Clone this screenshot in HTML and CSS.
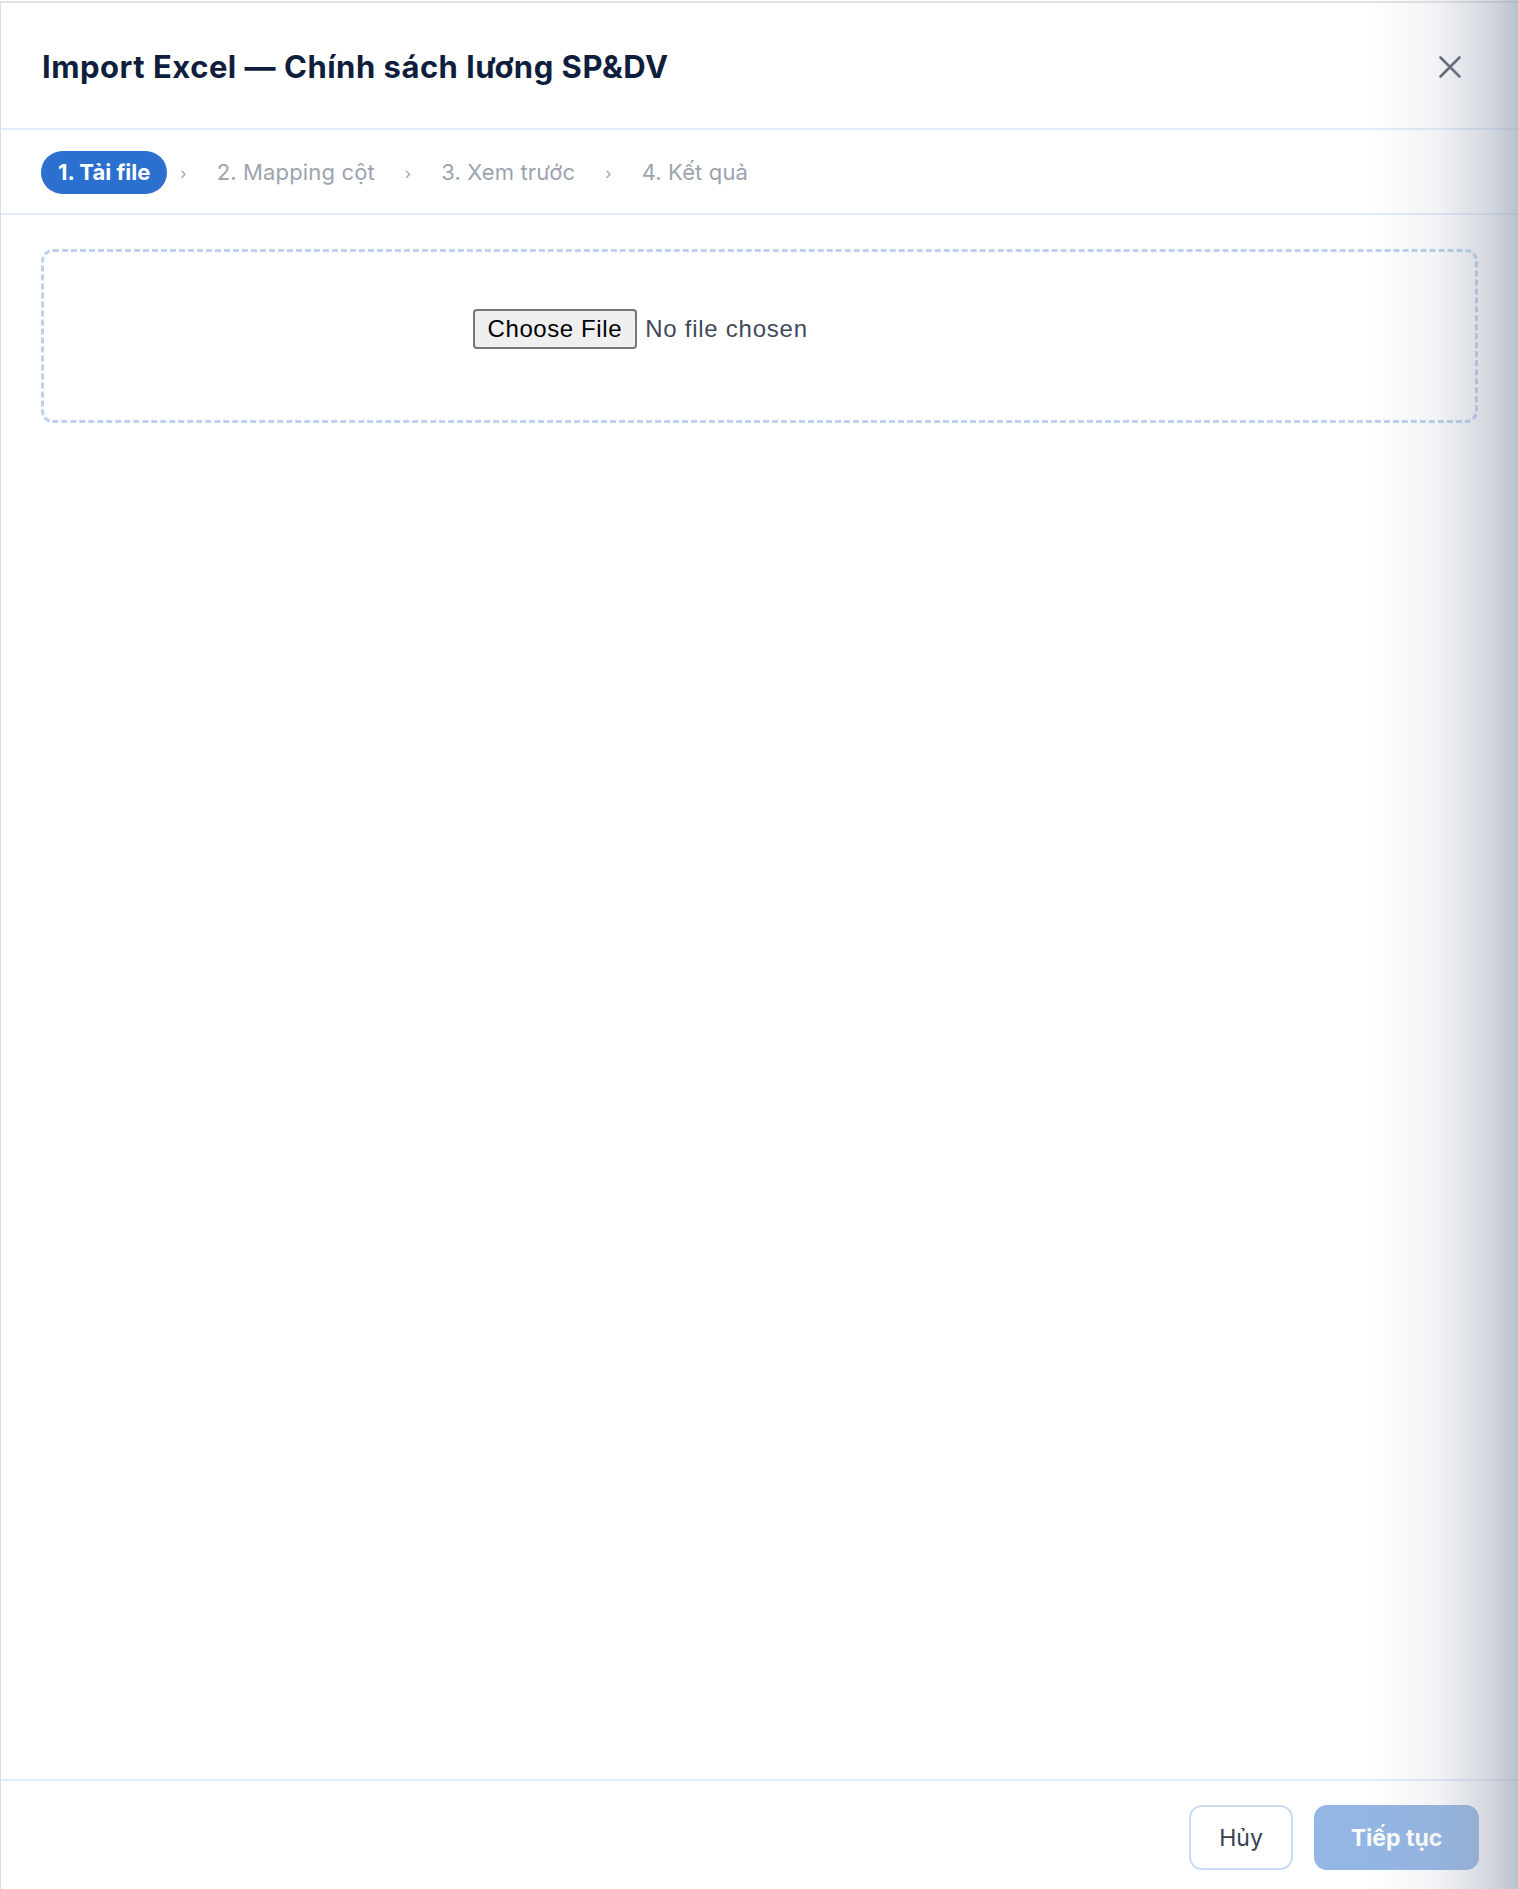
FILE: index.html
```html
<!DOCTYPE html>
<html lang="vi">
<head>
    <meta charset="UTF-8">
    <meta name="viewport" content="width=device-width, initial-scale=1.0">
    <title>Import Excel — Chính sách lương SP&amp;DV</title>
    <link rel="stylesheet" href="styles.css">
</head>
<body>
    <div class="drawer">
        <div class="drawer-head">
            <h2 class="drawer-title">Import Excel — Chính sách lương SP&amp;DV</h2>
            <button class="close-btn" type="button" aria-label="Đóng">
                <svg width="22" height="22" viewBox="0 0 22 22">
                    <path d="M1.5 1.5 L20.5 20.5 M20.5 1.5 L1.5 20.5" stroke="currentColor" stroke-width="2.6" stroke-linecap="round"/>
                </svg>
            </button>
        </div>
        <div class="steps">
            <span class="step active">1. Tải file</span>
            <span class="sep">›</span>
            <span class="step">2. Mapping cột</span>
            <span class="sep">›</span>
            <span class="step">3. Xem trước</span>
            <span class="sep">›</span>
            <span class="step">4. Kết quả</span>
        </div>
        <div class="drawer-body">
            <div class="dropzone">
                <input type="file" accept=".xlsx,.xls">
            </div>
        </div>
        <div class="drawer-foot">
            <button class="btn btn-ghost" type="button">Hủy</button>
            <button class="btn btn-primary" type="button" disabled>Tiếp tục</button>
        </div>
    </div>
    <div class="edge-shade"></div>
</body>
</html>
```

FILE: styles.css
```css
*{
    box-sizing: border-box;
}
body{
    margin: 0;
    padding-top: 1px;
    background: #fff;
    font-family: Inter, "Noto Sans", sans-serif;
}
.drawer{
    height: calc(100vh - 1px);
    display: flex;
    flex-direction: column;
    border-top: 2px solid #e3e3e3;
    border-left: 1px solid #cfe0f5;
    background: #fff;
}
.drawer-head{
    height: 127px;
    display: flex;
    align-items: center;
    justify-content: space-between;
    padding: 2px 57px 0 41px;
    border-bottom: 2px solid #e3edf9;
}
.drawer-title{
    margin: 0;
    font-size: 31px;
    font-weight: 700;
    color: #0f1e3d;
    letter-spacing: 0.5px;
}
.close-btn{
    border: none;
    background: none;
    padding: 0;
    color: #5b6270;
    display: flex;
    cursor: pointer;
}
.steps{
    height: 85px;
    display: flex;
    align-items: center;
    padding: 2px 40px 0;
    border-bottom: 2px solid #e3edf9;
    font-size: 22px;
    letter-spacing: 0.15px;
    color: #9ca3af;
}
.step{
    line-height: 43px;
    padding: 0 17px;
}
.step.active{
    background: #2b6fcf;
    color: #fff;
    font-weight: 700;
    letter-spacing: 0;
    border-radius: 22px;
}
.sep{
    font-size: 16px;
    margin: 0 13px;
}
.drawer-body{
    flex: 1;
    padding: 34px 40px;
}
.dropzone{
    height: 174px;
    padding-bottom: 14px;
    border: 3px dashed #bcd1ee;
    border-radius: 12px;
    display: flex;
    align-items: center;
    justify-content: center;
}
.dropzone input{
    width: 574px;
    font-family: "Liberation Sans", Arial, sans-serif;
    font-size: 24px;
    letter-spacing: 0.75px;
    color: #3f4a5c;
}
.dropzone input::file-selector-button{
    height: 40px;
    margin-right: 8px;
    padding: 0 13px;
    font: inherit;
    letter-spacing: 0.6px;
    color: #000;
    background: #efefef;
    border: 2px solid #767676;
    border-radius: 4px;
}
.drawer-foot{
    height: 110px;
    display: flex;
    align-items: center;
    justify-content: flex-end;
    gap: 21px;
    padding: 5px 39px 0;
    border-top: 2px solid #e3edf9;
}
.btn{
    height: 65px;
    border-radius: 13px;
    font-family: Inter, "Noto Sans", sans-serif;
    font-size: 23px;
    padding: 0 24px;
}
.btn-ghost{
    width: 104px;
    background: #fff;
    border: 2px solid #c8dcf3;
    color: #374151;
}
.btn-primary{
    width: 165px;
    background: #94b6e4;
    border: none;
    color: #fff;
    font-weight: 700;
}
/* shadow of the page edge falling over the right side */
.edge-shade{
    position: fixed;
    top: 0;
    right: 0;
    width: 150px;
    height: 100vh;
    pointer-events: none;
    background: linear-gradient(to right, rgba(150, 160, 178, 0) 0%, rgba(150, 160, 178, 0.12) 45%, rgba(150, 160, 178, 0.4) 80%, rgba(150, 160, 178, 0.65) 100%);
}
```
